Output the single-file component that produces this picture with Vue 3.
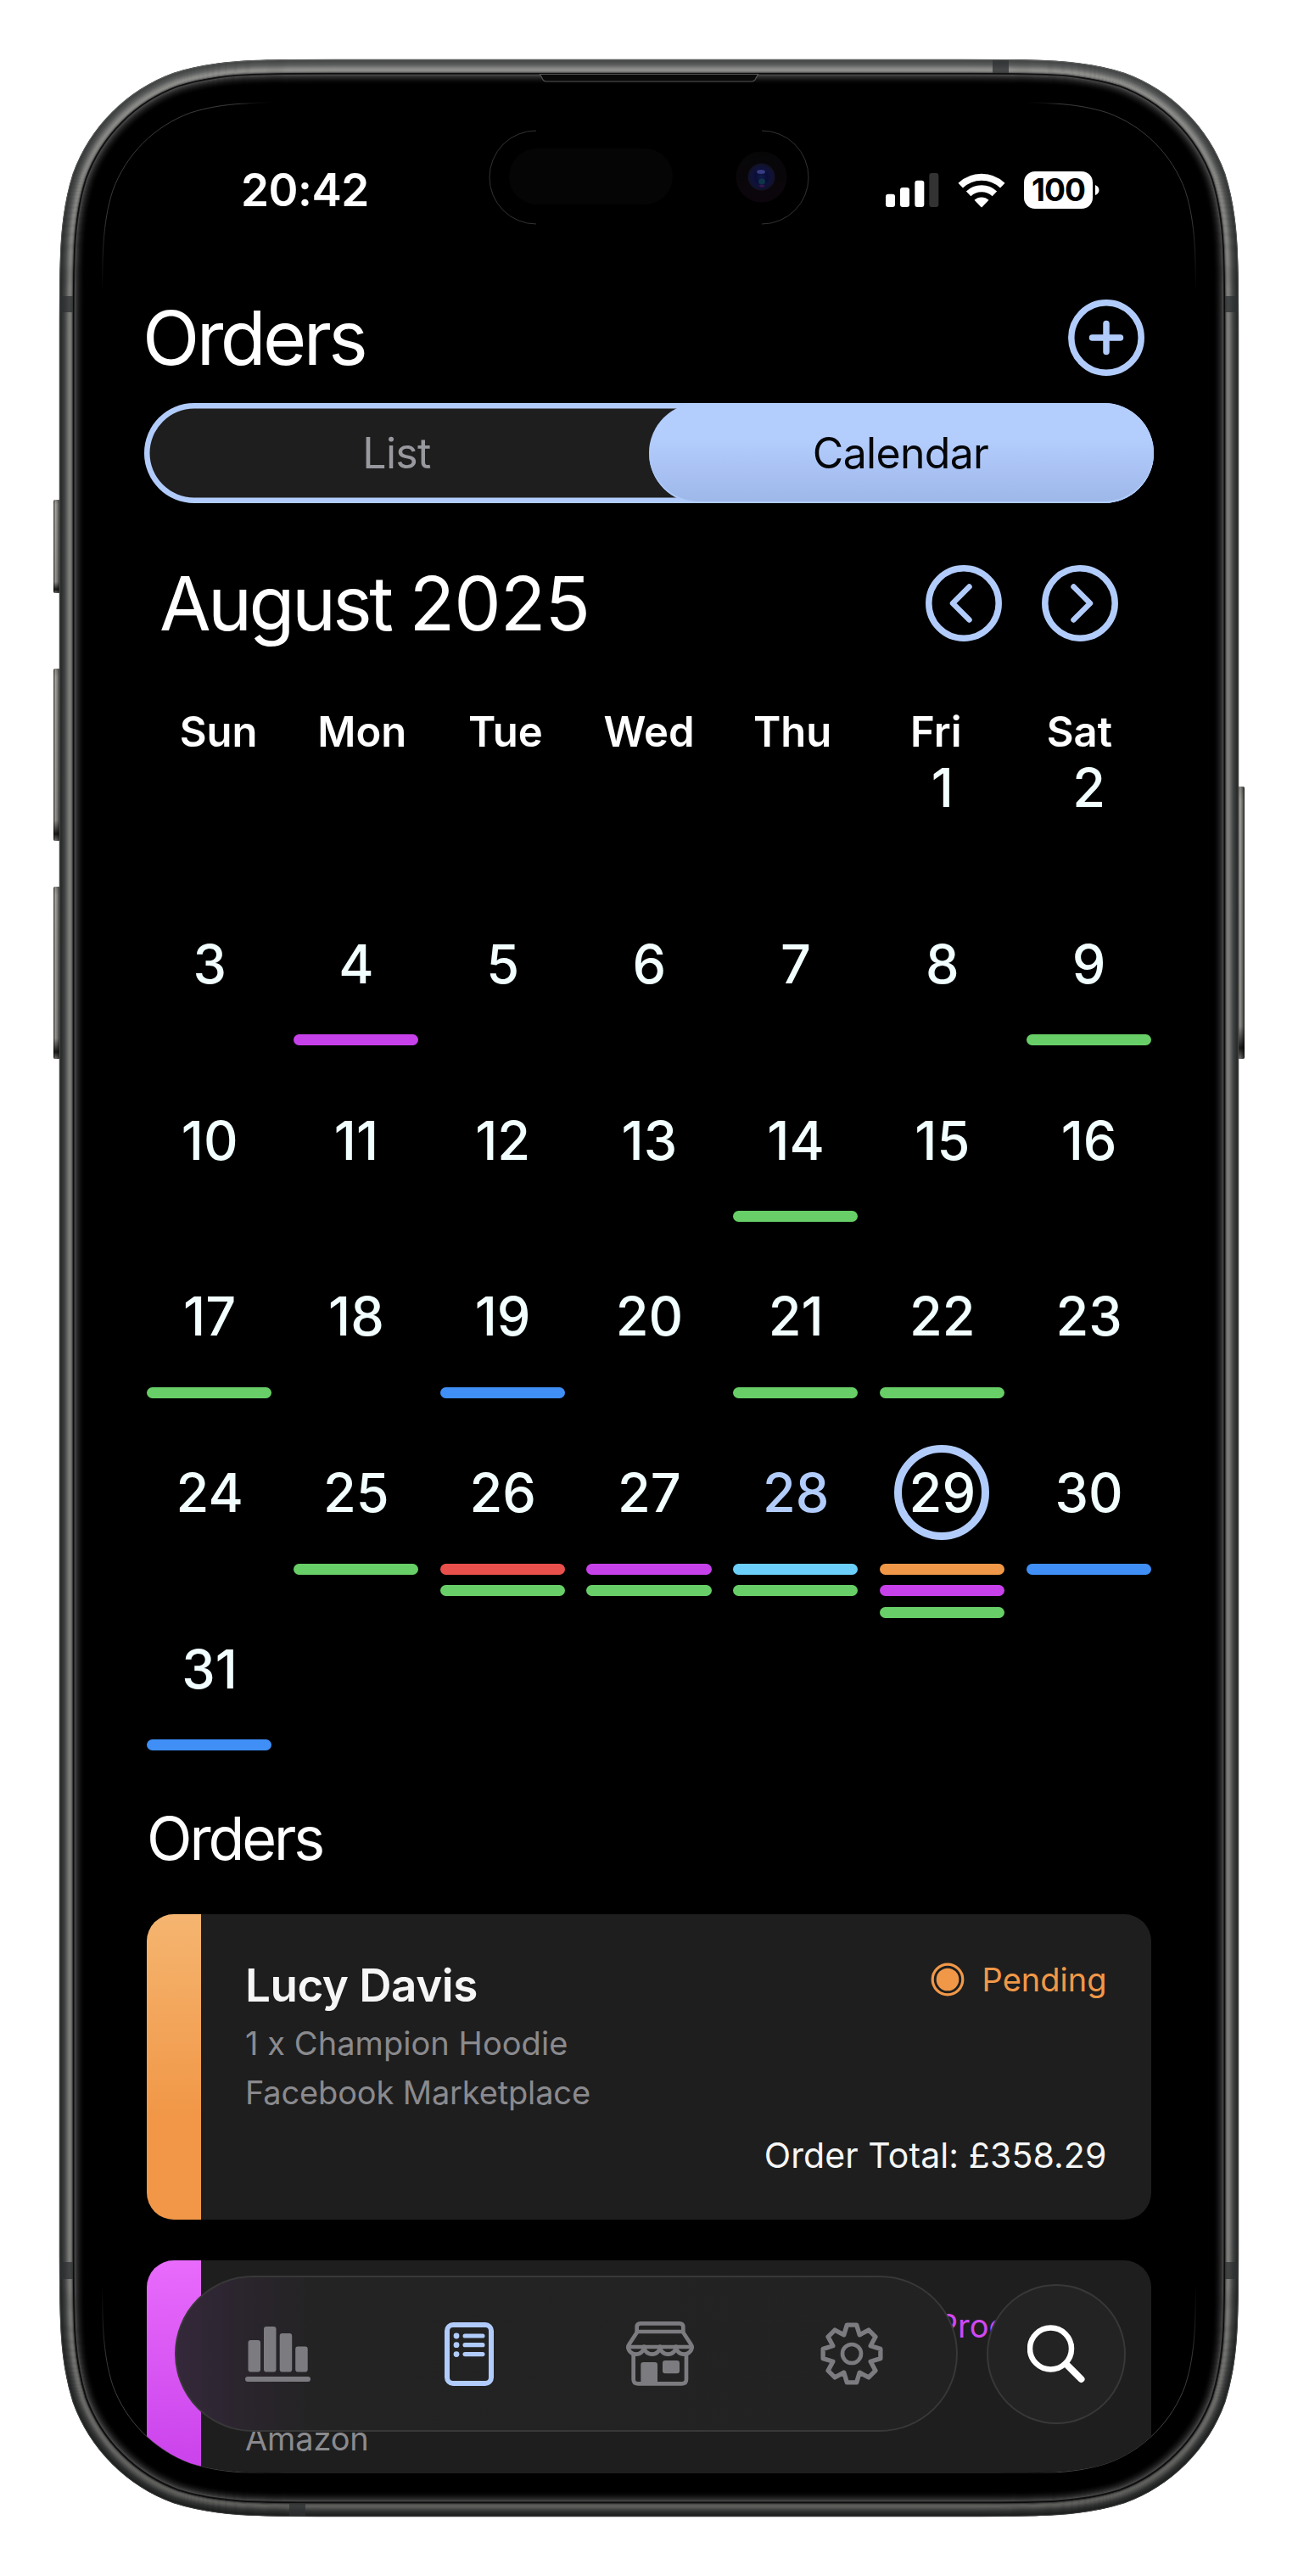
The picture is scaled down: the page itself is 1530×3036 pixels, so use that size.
<script setup>
const weekdays = ['Sun', 'Mon', 'Tue', 'Wed', 'Thu', 'Fri', 'Sat']

const marks = {
  4: ['purple'], 9: ['green'], 14: ['green'], 17: ['green'], 19: ['blue'],
  21: ['green'], 22: ['green'], 25: ['green'], 26: ['red', 'green'],
  27: ['purple', 'green'], 28: ['sky', 'green'],
  29: ['orange', 'purple', 'green'], 30: ['blue'], 31: ['blue'],
}

// August 2025 starts on a Friday, so five cells stay empty.
const cells = [
  ...Array.from({ length: 5 }, () => ({ day: null, bars: [] })),
  ...Array.from({ length: 31 }, (_, i) => ({ day: i + 1, bars: marks[i + 1] ?? [] })),
]

const orders = [
  { name: 'Lucy Davis', item: '1 x Champion Hoodie', shop: 'Facebook Marketplace', status: 'Pending', total: '£358.29', tone: 'orange' },
  { name: '', item: '', shop: 'Amazon', status: 'Processing', total: '', tone: 'purple' },
]

// Rounded rectangle with continuous-curvature corners.
function squircle(x, y, w, h, r) {
  const a = 1.52866 * r, b = 1.08849 * r, c = 0.86841 * r, d = 0.63149 * r
  const e = 0.07491 * r, f = 0.37282 * r, g = 0.16906 * r
  const R = x + w, B = y + h
  return `M${x + a} ${y}H${R - a}C${R - b} ${y} ${R - c} ${y} ${R - d} ${y + e}C${R - f} ${y + g} ${R - g} ${y + f} ${R - e} ${y + d}C${R} ${y + c} ${R} ${y + b} ${R} ${y + a}`
    + `V${B - a}C${R} ${B - b} ${R} ${B - c} ${R - e} ${B - d}C${R - g} ${B - f} ${R - f} ${B - g} ${R - d} ${B - e}C${R - c} ${B} ${R - b} ${B} ${R - a} ${B}`
    + `H${x + a}C${x + b} ${B} ${x + c} ${B} ${x + d} ${B - e}C${x + f} ${B - g} ${x + g} ${B - f} ${x + e} ${B - d}C${x} ${B - c} ${x} ${B - b} ${x} ${B - a}`
    + `V${y + a}C${x} ${y + b} ${x} ${y + c} ${x + e} ${y + d}C${x + g} ${y + f} ${x + f} ${y + g} ${x + d} ${y + e}C${x + c} ${y} ${x + b} ${y} ${x + a} ${y}Z`
}

const inset = (d) => squircle(70 + d, 70 + d, 1390 - 2 * d, 2896 - 2 * d, 213 - d)

// Metal band and inner glow, one ring per pixel from the outside in.
const tones = [
  '#4c4e4d', '#2b2d2d', '#2a2c2c', '#303232', '#363838', '#3b3d3d', '#424444', '#4b4d4c', '#575857',
  '#646563', '#70716e', '#7a7b77', '#7e7f7b', '#7a7b77', '#6c6d6a', '#4a4b4a', '#0c0c0c', '#161616',
  '#484848', '#3a3a3a', '#303030', '#272727', '#1f1f1f', '#181818', '#121212', '#0d0d0d', '#090909', '#050505', '#020202',
]
const rings = tones.map((tone, i) => ({ tone, d: inset(i + 0.5) }))
const body = inset(0)
const screenEdge = squircle(120.5, 120.5, 1289, 2795, 165)

const gear = Array.from({ length: 8 }, (_, k) => [[-9.5, 103], [9.5, 103], [22.5, 72]].map(([deg, r]) => {
  const t = ((45 * k + deg) * Math.PI) / 180
  return `${(110 + r * Math.sin(t)).toFixed(1)},${(110 - r * Math.cos(t)).toFixed(1)}`
}).join(' ')).join(' ')
</script>

<template>
  <main class="phone">
    <svg class="frame" viewBox="0 0 1530 3036" width="1530" height="3036" aria-hidden="true">
      <defs>
        <linearGradient id="btn" x1="0" x2="1" y1="0" y2="0">
          <stop offset="0" stop-color="#3a3a38" />
          <stop offset=".3" stop-color="#a5a49f" />
          <stop offset=".65" stop-color="#73726e" />
          <stop offset="1" stop-color="#222" />
        </linearGradient>
        <linearGradient id="btnEnd" x1="0" x2="0" y1="0" y2="1">
          <stop offset="0" stop-color="#000" stop-opacity=".15" />
          <stop offset=".05" stop-color="#000" stop-opacity="0" />
          <stop offset=".88" stop-color="#000" stop-opacity=".1" />
          <stop offset=".96" stop-color="#000" stop-opacity=".85" />
          <stop offset="1" stop-color="#000" stop-opacity=".3" />
        </linearGradient>
        <linearGradient id="shade" x1="0" x2="0" y1="0" y2="1">
          <stop offset="0" stop-color="#fff" stop-opacity=".14" />
          <stop offset=".04" stop-color="#fff" stop-opacity=".08" />
          <stop offset=".1" stop-color="#fff" stop-opacity="0" />
          <stop offset=".9" stop-color="#000" stop-opacity="0" />
          <stop offset="1" stop-color="#000" stop-opacity=".25" />
        </linearGradient>
        <linearGradient id="edge" gradientUnits="userSpaceOnUse" x1="0" x2="0" y1="120" y2="2916">
          <stop offset="0" stop-color="#3c3c3c" />
          <stop offset=".05" stop-color="#383838" />
          <stop offset=".08" stop-color="#000" />
          <stop offset=".92" stop-color="#000" />
          <stop offset=".95" stop-color="#383838" />
          <stop offset="1" stop-color="#4a4a4a" />
        </linearGradient>
        <linearGradient id="sides" gradientUnits="userSpaceOnUse" x1="120" x2="1410" y1="0" y2="0">
          <stop offset=".1" stop-color="#000" stop-opacity="0" />
          <stop offset=".155" stop-color="#000" />
          <stop offset=".845" stop-color="#000" />
          <stop offset=".9" stop-color="#000" stop-opacity="0" />
        </linearGradient>
      </defs>
      <g v-for="b in [[63, 589, 110], [63, 788, 203], [63, 1045, 203], [1459, 927, 321]]" :key="b[1]">
        <rect :x="b[0]" :y="b[1]" width="8" :height="b[2]" rx="2" fill="url(#btn)" />
        <rect :x="b[0]" :y="b[1]" width="8" :height="b[2]" rx="2" fill="url(#btnEnd)" />
      </g>
      <path :d="body" fill="#000" />
      <path v-for="(ring, i) in rings" :key="i" :d="ring.d" fill="none" :stroke="ring.tone" stroke-width="1.5" />
      <path :d="inset(8)" fill="none" stroke="url(#shade)" stroke-width="16" />
      <g fill="#2e3032" fill-opacity=".75">
        <rect x="71" y="349" width="15" height="19" />
        <rect x="1444" y="349" width="15" height="19" />
        <rect x="71" y="2666" width="15" height="20" />
        <rect x="1444" y="2666" width="15" height="20" />
        <rect x="1170" y="71" width="19" height="15" />
        <rect x="341" y="2950" width="19" height="15" />
      </g>
      <path d="M636.5 87.500L640 94Q641 96 644 96H886Q889 96 890 94L893.500 87.500Z" fill="#090909" stroke="#555" stroke-width="1.2" />
      <path :d="screenEdge" fill="none" stroke="url(#edge)" />
      <rect x="240" y="119" width="1050" height="3" fill="url(#sides)" />
      <rect x="240" y="2914" width="1050" height="3" fill="url(#sides)" />
    </svg>

    <div class="screen">
      <svg class="island" width="378" height="112" viewBox="0 0 378 112" aria-hidden="true">
        <defs>
          <radialGradient id="lens" cx=".5" cy=".5" r=".5">
            <stop offset="0" stop-color="#101a4a" />
            <stop offset=".45" stop-color="#0a0d36" />
            <stop offset=".7" stop-color="#10123a" />
            <stop offset="1" stop-color="#111224" />
          </radialGradient>
          <linearGradient id="halo" x1="0" x2="0" y1="0" y2="1">
            <stop offset="0" stop-color="#060607" />
            <stop offset="1" stop-color="#0c060c" />
          </linearGradient>
        </defs>
        <path d="M56 1A55 55 0 0 0 56 111M322 1A55 55 0 0 1 322 111" fill="none" stroke="#333" stroke-width="1" />
        <rect x="24" y="22" width="193" height="66" rx="33" fill="#050505" />
        <circle cx="321.500" cy="55.500" r="30" fill="url(#halo)" />
        <circle cx="321.500" cy="55.500" r="16" fill="url(#lens)" />
        <ellipse cx="321" cy="49.500" rx="5" ry="2.500" fill="#363c80" />
        <ellipse cx="322" cy="61" rx="4" ry="3.500" fill="#0d3448" />
        <ellipse cx="322" cy="66" rx="3" ry="1.500" fill="#3a1450" />
      </svg>

      <header class="status">
        <span class="clock">20:42</span>
        <div class="radios">
          <svg class="signal" width="63" height="40" viewBox="552 132 189 120" aria-hidden="true">
            <rect x="552" y="206" width="33" height="46" rx="9" fill="#fff" />
            <rect x="603" y="183" width="33" height="69" rx="9" fill="#fff" />
            <rect x="655" y="158" width="33" height="94" rx="9" fill="#fff" />
            <rect x="706" y="132" width="33" height="120" rx="9" fill="#333" />
          </svg>
          <svg class="wifi" width="56" height="41" viewBox="806 130 168 123" aria-hidden="true">
            <path d="M815.700 173.700A108 108 0 0 1 964.300 173.700M843.900 203.400A67 67 0 0 1 936.100 203.400" fill="none" stroke="#fff" stroke-width="24" />
            <path d="M864.500 225.500A37 37 0 0 1 915.500 225.500L892 250Q890 252 888 250Z" fill="#fff" />
          </svg>
          <div class="battery"><span class="level">100</span></div>
          <svg width="5" height="12" viewBox="0 0 5 12" aria-hidden="true"><path d="M0 0Q4.500 2 4.500 6Q4.500 10 0 12Z" fill="#fff" /></svg>
        </div>
      </header>

      <div class="heading">
        <h1 class="title">Orders</h1>
        <svg width="90" height="90" viewBox="0 0 90 90" aria-hidden="true">
          <circle cx="45" cy="45" r="41.200" class="line" />
          <path d="M45 28.500V61.500M28.500 45H61.500" class="line" />
        </svg>
      </div>

      <div class="toggle">
        <span class="tab">List</span>
        <span class="tab active">Calendar</span>
      </div>

      <div class="month">
        <h2 class="title">August <span class="year">2025</span></h2>
        <div class="arrows">
          <svg width="90" height="90" viewBox="0 0 90 90" aria-hidden="true">
            <circle cx="45" cy="45" r="41.200" class="line" />
            <path d="M51.500 25.500L32 45L51.500 64.500" class="line thin" />
          </svg>
          <svg width="90" height="90" viewBox="0 0 90 90" aria-hidden="true">
            <circle cx="45" cy="45" r="41.200" class="line" />
            <path d="M37.500 25.500L57 45L37.500 64.500" class="line thin" />
          </svg>
        </div>
      </div>

      <div class="weekdays">
        <span v-for="w in weekdays" :key="w">{{ w }}</span>
      </div>

      <div class="days">
        <div v-for="(cell, i) in cells" :key="i" class="day" :class="{ today: cell.day === 28, picked: cell.day === 29 }">
          <span class="number">{{ cell.day }}</span>
          <div class="bars">
            <i v-for="bar in cell.bars" :key="bar" class="bar" :class="bar" />
          </div>
        </div>
      </div>

      <h2 class="section">Orders</h2>

      <article v-for="order in orders" :key="order.shop" class="card" :class="order.tone + '-card'">
        <div class="stripe" />
        <div class="details">
          <h3 class="name">{{ order.name }}</h3>
          <p class="sub item">{{ order.item }}</p>
          <p class="sub shop">{{ order.shop }}</p>
        </div>
        <div class="summary">
          <div class="state">
            <svg width="40" height="40" viewBox="0 0 40 40" aria-hidden="true">
              <circle cx="20" cy="20" r="17.800" fill="none" stroke="currentColor" stroke-width="3.200" />
              <circle cx="20" cy="20" r="13.300" fill="currentColor" />
            </svg>
            <span>{{ order.status }}</span>
          </div>
          <p v-if="order.total" class="total">Order Total: {{ order.total }}</p>
        </div>
      </article>

      <nav class="dock">
        <div class="tabs">
          <svg class="chart" width="77" height="65" viewBox="0 0 77 65" fill="#7c7c80" aria-hidden="true">
            <rect x="3.500" y="16" width="14.500" height="37.500" rx="3" />
            <rect x="22" y="0" width="14.500" height="53.500" rx="3" />
            <rect x="40.700" y="8" width="14.500" height="45.500" rx="3" />
            <rect x="59.200" y="23.500" width="14.500" height="30" rx="3" />
            <rect x="0" y="59" width="77" height="6" rx="3" />
          </svg>
          <svg class="note" width="58" height="75" viewBox="0 0 58 75" aria-hidden="true">
            <rect x="3" y="3" width="52" height="69" rx="7" fill="none" stroke="#b1ccfb" stroke-width="6" />
            <g fill="#b1ccfb">
              <circle cx="14" cy="16" r="3.400" /><rect x="21.500" y="13.400" width="26" height="5.200" rx="2.600" />
              <circle cx="14" cy="26.700" r="3.400" /><rect x="21.500" y="24.100" width="26" height="5.200" rx="2.600" />
              <circle cx="14" cy="37.600" r="3.400" /><rect x="21.500" y="35" width="26" height="5.200" rx="2.600" />
            </g>
          </svg>
          <svg class="store" width="80" height="76" viewBox="24 48 240 228" aria-hidden="true">
            <g fill="none" stroke="#7c7c80" stroke-width="14" stroke-linejoin="round">
              <path d="M62 84V68Q62 55 75 55H213Q226 55 226 68V84Z" />
              <path d="M64 84L34 130Q31 134 31 138H257Q257 134 254 130L224 84" />
              <path d="M31 137A28.250 27 0 0 0 87.500 137A28.250 27 0 0 0 144 137A28.250 27 0 0 0 200.500 137A28.250 27 0 0 0 257 137" />
              <path d="M50 163V253Q50 268 65 268H222Q237 268 237 253V163" />
            </g>
            <rect x="76" y="192" width="59" height="78" rx="9" fill="#7c7c80" />
            <rect x="153" y="186" width="60" height="46" rx="9" fill="#7c7c80" />
          </svg>
          <svg class="gear" width="74" height="74" viewBox="-1 -1 222 222" aria-hidden="true">
            <polygon :points="gear" fill="none" stroke="#7c7c80" stroke-width="16" stroke-linejoin="round" />
            <circle cx="110" cy="110" r="33" fill="none" stroke="#7c7c80" stroke-width="14" />
          </svg>
        </div>
        <div class="search">
          <svg width="68" height="69" viewBox="0 0 68 69" fill="none" stroke="#fff" aria-hidden="true">
            <circle cx="27.500" cy="28" r="24.500" stroke-width="6.500" />
            <path d="M45.500 46L63.500 64" stroke-width="8" stroke-linecap="round" />
          </svg>
        </div>
      </nav>
    </div>
  </main>
</template>

<style>
body { background: #fff; }
</style>

<style scoped>
.phone {
  position: relative;
  box-sizing: border-box;
  width: 1530px;
  height: 3036px;
  padding: 120px;
  overflow: hidden;
  font-family: Inter, "Liberation Sans", sans-serif;
  color: #fff;
}
.frame { position: absolute; inset: 0; }
.screen {
  position: relative;
  width: 1290px;
  height: 2795px;
  overflow: hidden;
  clip-path: path("M252 0H1038C1108 0 1147 0 1186 12C1228 28 1262 62 1278 104C1290 143 1290 180 1290 252V2543C1290 2615 1290 2652 1278 2691C1262 2733 1228 2767 1186 2783C1147 2795 1108 2795 1038 2795H252C182 2795 143 2795 104 2783C62 2767 28 2733 12 2691C0 2652 0 2615 0 2543V252C0 180 0 143 12 104C28 62 62 28 104 12C143 0 182 0 252 0Z");
}
h1, h2, h3, p { margin: 0; font-weight: 400; }
.island { position: absolute; left: 456px; top: 33px; }
.status {
  display: flex;
  justify-content: space-between;
  align-items: center;
  height: 208px;
  padding: 0 114px 0 164px;
}
.clock { font-size: 53px; font-weight: 600; letter-spacing: -0.5px; }
.radios { display: flex; align-items: center; }
.wifi { margin-left: 22px; }
.battery {
  margin: 0 3px 0 22px;
  width: 81px;
  height: 44px;
  border-radius: 13px;
  background: #fff;
  text-align: center;
}
.level { font-size: 37px; line-height: 44px; font-weight: 700; letter-spacing: -0.900px; color: #000; }
.heading {
  display: flex;
  justify-content: space-between;
  align-items: center;
  height: 140px;
  padding: 0 61px 0 48px;
}
.title { font-size: 88px; line-height: 100px; letter-spacing: -3.600px; }
.year { margin-left: 1px; letter-spacing: -1px; }
.line { fill: none; stroke: #b1ccfb; stroke-width: 7.500; stroke-linecap: round; stroke-linejoin: round; }
.thin { stroke-width: 6.500; }
.toggle {
  display: flex;
  box-sizing: border-box;
  width: 1190px;
  height: 118px;
  margin: 7px 50px 0;
  border-radius: 59px;
  background: #1e1e1e;
  box-shadow: inset 0 0 0 6.500px #b1ccfb;
}
.tab {
  flex: 1;
  font-size: 50px;
  line-height: 118px;
  text-align: center;
  color: #98989f;
  letter-spacing: -0.700px;
}
.active {
  border-radius: 59px;
  color: #050608;
  background: linear-gradient(#b3cdfd 35%, #9fb8ea 97%);
  box-shadow: inset 0 -2px 1px #b1ccfb;
  text-indent: -2px;
}
.month {
  display: flex;
  justify-content: space-between;
  align-items: center;
  height: 236px;
  padding: 0 92.500px 0 68px;
}
.arrows { display: flex; gap: 46.500px; }
.weekdays {
  display: grid;
  grid-template-columns: repeat(7, 1fr);
  height: 66px;
  margin: 0 53px;
  font-size: 49px;
  line-height: 67px;
  font-weight: 600;
  text-align: center;
}
.days {
  display: grid;
  grid-template-columns: repeat(7, 147.200px);
  grid-auto-rows: 207.800px;
  column-gap: 25.550px;
  margin: 0 0 0 53.200px;
}
.day { position: relative; text-align: center; }
.number { display: block; height: 66px; padding-left: 0.800px; font-size: 63px; line-height: 66px; font-weight: 500; color: #f2ffff; }
.today .number { color: #b1ccfb; }
.picked::before {
  content: "";
  position: absolute;
  left: 17.600px;
  top: -23px;
  box-sizing: border-box;
  width: 112px;
  height: 112px;
  border: 9.500px solid #b1ccfb;
  border-radius: 50%;
}
.bars { display: flex; flex-direction: column; gap: 12.500px; padding-top: 50.500px; }
.bar { height: 13px; border-radius: 6.500px; }
.green { background: #68ce67; }
.purple { background: #c741ea; }
.blue { background: #3f8ff7; }
.red { background: #ea504b; }
.sky { background: #6bcff9; }
.orange { background: #f19848; }
.section { height: 49.400px; margin: 0 0 64.800px 53px; font-size: 70px; line-height: 49.400px; letter-spacing: -3.100px; }
.card {
  display: flex;
  box-sizing: border-box;
  width: 1184px;
  height: 360.500px;
  margin: 0 53px 47.500px;
  border-radius: 32px;
  overflow: hidden;
  background: #1e1e1e;
}
.stripe { width: 64px; }
.orange-card .stripe { background: linear-gradient(#f5b570, #f19747 66%); }
.purple-card .stripe { background: linear-gradient(#e86bfc, #c840ea 72%); }
.details { flex: 1; padding: 52.500px 0 0 52px; }
.name { height: 64px; font-size: 53px; line-height: 64px; font-weight: 600; color: #f6f6f6; letter-spacing: -0.5px; }
.sub { height: 58px; font-size: 38px; line-height: 58px; color: #8a8a8e; white-space: nowrap; }
.item { margin-top: 7px; letter-spacing: 0.060px; }
.shop { letter-spacing: -0.150px; }
.summary { display: flex; flex-direction: column; align-items: flex-end; padding: 48px 52.500px 0 0; }
.state { display: flex; align-items: center; gap: 20.500px; font-size: 38px; line-height: 58px; }
.orange-card .state { color: #f19848; }
.purple-card .state { color: #d048f2; }
.total { margin-top: 149px; font-size: 41px; line-height: 58px; color: #f6f6f6; letter-spacing: 0.100px; }
.dock {
  position: absolute;
  left: 86px;
  top: 2562px;
  display: flex;
  align-items: center;
  gap: 34px;
}
.tabs {
  display: flex;
  align-items: center;
  box-sizing: border-box;
  width: 923px;
  height: 184px;
  padding-left: 81px;
  border: 2px solid #383838;
  border-radius: 92px;
  background: linear-gradient(90deg, #34283a 0, #2b252e 75px, #232323 165px, #222 100%);
}
.note { margin-left: 158px; }
.store { margin-left: 156px; }
.gear { margin-left: 149px; }
.search {
  display: flex;
  align-items: center;
  justify-content: center;
  box-sizing: border-box;
  width: 164px;
  height: 165px;
  border: 2px solid #383838;
  border-radius: 50%;
  background: #232323;
}
</style>
